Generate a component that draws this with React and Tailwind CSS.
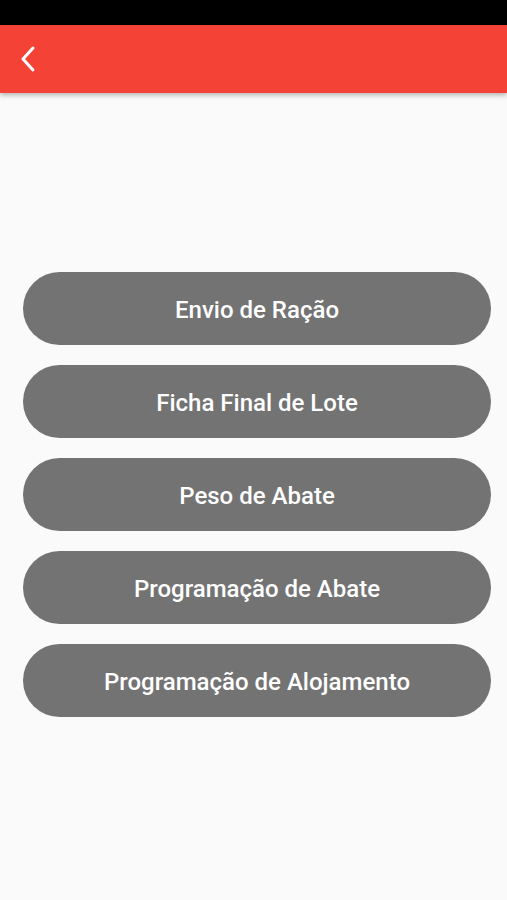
const items = [
  "Envio de Ração",
  "Ficha Final de Lote",
  "Peso de Abate",
  "Programação de Abate",
  "Programação de Alojamento",
];

export default function App() {
  return (
    <div className="flex h-[900px] w-full flex-col bg-[#fafafa]" style={{ fontFamily: "Roboto, sans-serif" }}>
      <div className="h-[25px] w-full bg-black" />
      <div className="relative z-10 flex h-[68px] w-full items-center bg-[#f44336] px-[18px] shadow-[0_2px_5px_rgba(0,0,0,0.3)]">
        <svg width="22" height="28" viewBox="0 0 22 28" fill="none">
          <path d="M15 3 L5 14 L15 25" stroke="white" strokeWidth="3" strokeLinecap="round" strokeLinejoin="round" />
        </svg>
      </div>
      <div className="flex flex-col gap-[20px] pl-[23px] pr-[16px] pt-[179px]">
        {items.map((label) => (
          <button
            key={label}
            className="flex h-[73px] w-full items-center justify-center rounded-full bg-[#737373] pt-[3px] text-[24px] font-medium text-white"
          >
            {label}
          </button>
        ))}
      </div>
    </div>
  );
}
